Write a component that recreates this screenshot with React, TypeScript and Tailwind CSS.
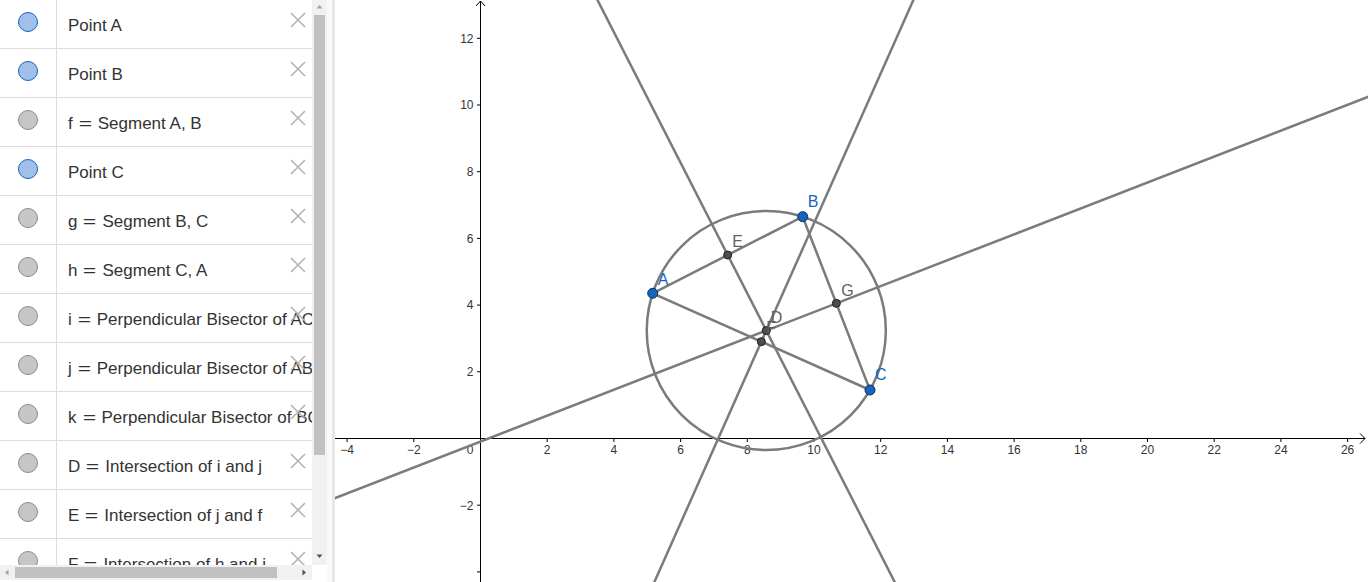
import React from "react";

type P = { x: number; y: number };

const rows: { name: string; rest: string; blue?: boolean }[] = [
  { name: "Point A", rest: "", blue: true },
  { name: "Point B", rest: "", blue: true },
  { name: "f", rest: "Segment A, B" },
  { name: "Point C", rest: "", blue: true },
  { name: "g", rest: "Segment B, C" },
  { name: "h", rest: "Segment C, A" },
  { name: "i", rest: "Perpendicular Bisector of AC" },
  { name: "j", rest: "Perpendicular Bisector of AB" },
  { name: "k", rest: "Perpendicular Bisector of BC" },
  { name: "D", rest: "Intersection of i and j" },
  { name: "E", rest: "Intersection of j and f" },
  { name: "F", rest: "Intersection of h and i" },
  { name: "G", rest: "Intersection of g and k" },
];

function Row({ name, rest, blue }: { name: string; rest: string; blue?: boolean }) {
  return (
    <div className="relative flex h-[49px] border-b border-[#dcdcdc]">
      <div className="flex w-[57px] shrink-0 justify-center border-r border-[#dcdcdc] pt-[12px]">
        <div
          className={
            blue
              ? "h-[20px] w-[20px] rounded-full border border-[#1a63bf] bg-[#9fc0e7]"
              : "h-[20px] w-[20px] rounded-full border border-[#8c8c8c] bg-[#c6c6c6]"
          }
        />
      </div>
      <div className="flex items-center whitespace-nowrap pl-[11px] pt-[3px] text-[17px] text-[#333333]">
        <span>{name}</span>
        {rest && (
          <>
            <span className="mx-[6px] inline-block w-[13px] scale-x-[1.35] text-center">=</span>
            <span>{rest}</span>
          </>
        )}
      </div>
      <svg className="absolute left-[290px] top-[12px]" width="16" height="16" viewBox="0 0 16 16">
        <path d="M1 1 L15 15 M15 1 L1 15" stroke="#b4b4b4" strokeWidth="1.6" fill="none" />
      </svg>
    </div>
  );
}

function Tri({ dir, color }: { dir: "up" | "down" | "left" | "right"; color: string }) {
  const pts =
    dir === "up"
      ? "0.5,4.5 3.5,1 6.5,4.5"
      : dir === "down"
      ? "0.5,1.5 3.5,5 6.5,1.5"
      : dir === "left"
      ? "4.5,0.5 1,3.5 4.5,6.5"
      : "1.5,0.5 5,3.5 1.5,6.5";
  return (
    <svg width="7" height="7" viewBox="0 0 7 7">
      <polygon points={pts} fill={color} />
    </svg>
  );
}

const W = 1033;
const H = 582;
const O: P = { x: 145.5, y: 438.5 };
const S = 33.35;

const A: P = { x: 317.7, y: 293.3 };
const B: P = { x: 467.7, y: 216.7 };
const C: P = { x: 535, y: 390 };

const mid = (p: P, q: P): P => ({ x: (p.x + q.x) / 2, y: (p.y + q.y) / 2 });

function circumcenter(a: P, b: P, c: P): P {
  const d = 2 * (a.x * (b.y - c.y) + b.x * (c.y - a.y) + c.x * (a.y - b.y));
  const a2 = a.x * a.x + a.y * a.y;
  const b2 = b.x * b.x + b.y * b.y;
  const c2 = c.x * c.x + c.y * c.y;
  return {
    x: (a2 * (b.y - c.y) + b2 * (c.y - a.y) + c2 * (a.y - b.y)) / d,
    y: (a2 * (c.x - b.x) + b2 * (a.x - c.x) + c2 * (b.x - a.x)) / d,
  };
}

function perp(p: P, q: P): [P, P] {
  const m = mid(p, q);
  const dx = q.x - p.x;
  const dy = q.y - p.y;
  const l = Math.hypot(dx, dy);
  const ux = -dy / l;
  const uy = dx / l;
  return [
    { x: m.x - ux * 3000, y: m.y - uy * 3000 },
    { x: m.x + ux * 3000, y: m.y + uy * 3000 },
  ];
}

function Graph() {
  const D = circumcenter(A, B, C);
  const r = Math.hypot(D.x - A.x, D.y - A.y);
  const E = mid(A, B);
  const F = mid(C, A);
  const G = mid(B, C);
  const lines = [perp(A, C), perp(A, B), perp(B, C)];
  const lineColor = "#7b7b7b";
  const xs: number[] = [];
  for (let v = -4; v <= 26; v += 2) if (v !== 0) xs.push(v);
  const ys: number[] = [];
  for (let v = -4; v <= 12; v += 2) if (v !== 0) ys.push(v);
  const fmt = (v: number) => (v < 0 ? "\u2212" + Math.abs(v) : String(v));
  const font = "Liberation Sans, Arial, sans-serif";
  const labels: { p: P; t: string; dx: number; dy: number; c: string }[] = [
    { p: A, t: "A", dx: 5, dy: -8, c: "#1565c0" },
    { p: B, t: "B", dx: 5, dy: -10, c: "#1565c0" },
    { p: C, t: "C", dx: 5, dy: -10, c: "#1565c0" },
    { p: D, t: "D", dx: 4.5, dy: -7.5, c: "#5f5f5f" },
    { p: E, t: "E", dx: 4.5, dy: -8, c: "#5f5f5f" },
    { p: F, t: "F", dx: 5, dy: -8.5, c: "#5f5f5f" },
    { p: G, t: "G", dx: 5, dy: -7.5, c: "#5f5f5f" },
  ];
  return (
    <svg width={W} height={H} viewBox={`0 0 ${W} ${H}`} className="block">
      <line x1={0} y1={O.y} x2={W - 3} y2={O.y} stroke="#000" strokeWidth={1} />
      <line x1={O.x} y1={H} x2={O.x} y2={1} stroke="#000" strokeWidth={1} />
      <polyline points={`${W - 8},${O.y - 5} ${W - 3},${O.y} ${W - 8},${O.y + 5}`} fill="none" stroke="#000" strokeWidth={1} />
      <polyline points={`${O.x - 4.5},${6} ${O.x},${1} ${O.x + 4.5},${6}`} fill="none" stroke="#000" strokeWidth={1} />
      {xs.map((v) => {
        const x = O.x + v * S;
        return (
          <g key={"x" + v}>
            <line x1={x} y1={O.y} x2={x} y2={O.y + 3.5} stroke="#000" strokeWidth={1} />
            <text x={x} y={O.y + 15.5} textAnchor="middle" fontSize={12} fontFamily={font} fill="#333">
              {fmt(v)}
            </text>
          </g>
        );
      })}
      {ys.map((v) => {
        const y = O.y - v * S;
        return (
          <g key={"y" + v}>
            <line x1={O.x - 3.5} y1={y} x2={O.x} y2={y} stroke="#000" strokeWidth={1} />
            {v !== -4 && (
              <text x={O.x - 7} y={y + 4.3} textAnchor="end" fontSize={12} fontFamily={font} fill="#333">
                {fmt(v)}
              </text>
            )}
          </g>
        );
      })}
      <text x={O.x - 7} y={O.y + 15.5} textAnchor="end" fontSize={12} fontFamily={font} fill="#333">
        0
      </text>
      {lines.map(([p, q], i) => (
        <line key={i} x1={p.x} y1={p.y} x2={q.x} y2={q.y} stroke={lineColor} strokeWidth={2.5} />
      ))}
      <circle cx={D.x} cy={D.y} r={r} fill="none" stroke={lineColor} strokeWidth={2.5} />
      <polygon points={`${A.x},${A.y} ${B.x},${B.y} ${C.x},${C.y}`} fill="none" stroke={lineColor} strokeWidth={2.5} />
      {[D, E, F, G].map((p, i) => (
        <circle key={"g" + i} cx={p.x} cy={p.y} r={4} fill="#4d4d4d" stroke="#1f1f1f" strokeWidth={1} />
      ))}
      {[A, B, C].map((p, i) => (
        <circle key={"b" + i} cx={p.x} cy={p.y} r={5} fill="#1565c0" stroke="#0b2f5c" strokeWidth={1} />
      ))}
      {labels.map((l) => (
        <text key={l.t} x={l.p.x + l.dx} y={l.p.y + l.dy} fontSize={16} fontFamily={font} fill={l.c}>
          {l.t}
        </text>
      ))}
    </svg>
  );
}

export default function App() {
  return (
    <div className="flex h-[582px] w-[1368px] overflow-hidden bg-white font-['Liberation_Sans',Arial,sans-serif]">
      <div className="flex w-[327px] shrink-0 flex-col">
        <div className="flex h-[565px]">
          <div className="w-[312px] shrink-0 overflow-hidden">
            {rows.map((r, i) => (
              <Row key={i} name={r.name} rest={r.rest} blue={r.blue} />
            ))}
          </div>
          <div className="flex w-[15px] shrink-0 flex-col items-center bg-[#f1f1f1]">
            <div className="flex h-[15px] w-full items-center justify-center">
              <Tri dir="up" color="#a3a3a3" />
            </div>
            <div className="h-[440px] w-[11px] shrink-0 bg-[#c1c1c1]" />
            <div className="flex-1" />
            <div className="flex h-[17px] w-full items-center justify-center">
              <Tri dir="down" color="#505050" />
            </div>
          </div>
        </div>
        <div className="flex h-[15px]">
          <div className="flex w-[312px] shrink-0 items-center bg-[#f1f1f1]">
            <div className="flex h-[15px] w-[15px] shrink-0 items-center justify-center">
              <Tri dir="left" color="#a3a3a3" />
            </div>
            <div className="h-[11px] w-[262px] shrink-0 bg-[#c1c1c1]" />
            <div className="flex-1" />
            <div className="flex h-[15px] w-[15px] shrink-0 items-center justify-center">
              <Tri dir="right" color="#505050" />
            </div>
          </div>
          <div className="w-[15px] shrink-0 bg-white" />
        </div>
      </div>
      <div className="w-[5px] shrink-0 bg-[#fafafa]" />
      <div className="w-[3px] shrink-0 bg-[#e8e8e8]" />
      <div className="flex-1 overflow-hidden">
        <Graph />
      </div>
    </div>
  );
}
